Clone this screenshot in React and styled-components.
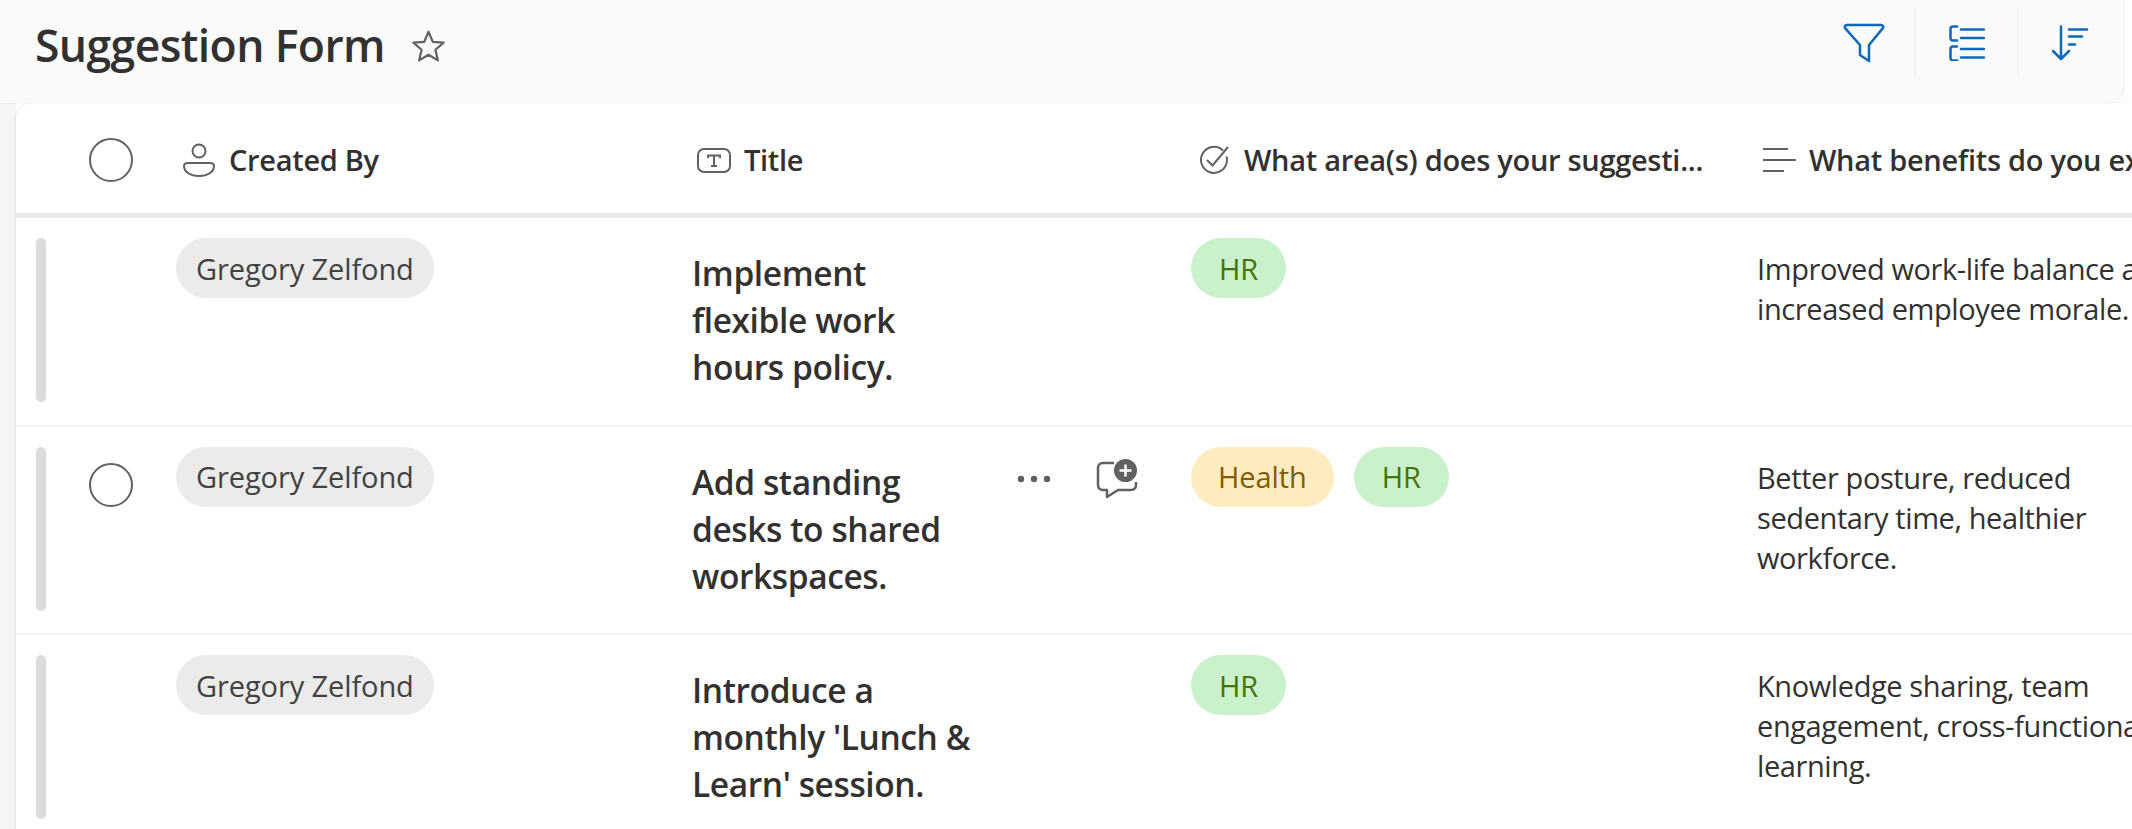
import React from "react";
import styled, { createGlobalStyle } from "styled-components";

const GlobalStyle = createGlobalStyle`
  html, body {
    margin: 0;
    padding: 0;
    height: 829px;
    overflow: hidden;
    background: #ffffff;
    font-family: "Open Sans", "Noto Sans", sans-serif;
  }
`;

const COLUMNS = "160px 515px 500px 565px 1fr";

const Page = styled.div`
  width: 2132px;
  height: 829px;
  overflow: hidden;
  display: flex;
  flex-direction: column;
`;

const TopBar = styled.header`
  position: relative;
  z-index: 1;
  width: 2123px;
  height: 103px;
  flex: none;
  display: flex;
  align-items: flex-start;
  justify-content: space-between;
  background: #fafafa;
  border-bottom-right-radius: 16px;
  box-shadow: 1px 0 3px rgba(0, 0, 0, 0.08);
`;

const TitleGroup = styled.div`
  display: flex;
  align-items: center;
  height: 88px;
  padding-left: 35px;
  gap: 26px;
`;

const PageTitle = styled.h1`
  margin: 0;
  font-size: 44.5px;
  font-weight: 600;
  letter-spacing: -0.6px;
  color: #323130;
`;

const StarSvg = styled.svg`
  flex: none;
  margin-top: 5px;
  fill: none;
  stroke: #616161;
  stroke-width: 2;
  stroke-linejoin: round;
`;

const Toolbar = styled.div`
  display: flex;
  padding-top: 8px;
  padding-right: 3px;
`;

const ToolButton = styled.div`
  width: 103px;
  height: 67px;
  display: flex;
  align-items: center;
  justify-content: center;
  box-sizing: border-box;
  border-left: 2px solid #f3f3f3;
  padding-top: 2px;
  ${({ $first }) => $first && "border-left-color: transparent;"}
`;

const Body = styled.main`
  flex: 1;
  min-height: 0;
  background: linear-gradient(to right, #f5f5f5 16px, #ffffff 16px);
`;

const Card = styled.section`
  height: 100%;
  margin-left: 16px;
  background: #ffffff;
  border-top-left-radius: 16px;
  box-shadow: -1px 0 3px rgba(0, 0, 0, 0.08);
  overflow: hidden;
`;

const HeaderRow = styled.div`
  display: grid;
  grid-template-columns: ${COLUMNS};
  height: 115px;
  box-sizing: border-box;
  padding-top: 4px;
  border-bottom: 5px solid #e9e9e9;
`;

const SelectCell = styled.div`
  display: flex;
  align-items: center;
  padding-left: 73px;
`;

const HeaderCell = styled.div`
  display: flex;
  align-items: center;
  gap: 12px;
  padding-left: 5px;
  min-width: 0;
  white-space: nowrap;
  overflow: hidden;
`;

const HeaderLabel = styled.span`
  padding-bottom: 2px;
  font-size: 29px;
  font-weight: 600;
  letter-spacing: -0.3px;
  color: #323130;
`;

const IconBox = styled.svg`
  width: 36px;
  height: 36px;
  flex: none;
  fill: none;
  stroke: #616161;
  stroke-width: 2;
`;

const Circle = styled.div`
  width: 44px;
  height: 44px;
  flex: none;
  box-sizing: border-box;
  border: 2px solid #616161;
  border-radius: 50%;
  visibility: ${({ $hidden }) => ($hidden ? "hidden" : "visible")};
`;

const Row = styled.div`
  display: grid;
  grid-template-columns: ${COLUMNS};
  height: 208.5px;
  box-sizing: border-box;
  padding-top: 20px;
  border-bottom: 2px solid #f2f2f2;
`;

const RowLead = styled.div`
  display: flex;
  align-items: flex-start;
  gap: 43px;
  padding-left: 20px;
`;

const DragBar = styled.div`
  width: 10px;
  height: 164px;
  flex: none;
  background: #dcdcdc;
  border-radius: 5px;
`;

const RowCircle = styled(Circle)`
  margin-top: 16px;
`;

const Tags = styled.div`
  display: flex;
  align-items: flex-start;
  gap: 20px;
`;

const TAG_COLORS = {
  person: { bg: "#ebebeb", fg: "#424242", pad: 20 },
  green: { bg: "#caf0cc", fg: "#437406", pad: 28 },
  amber: { bg: "#feecc1", fg: "#835b00", pad: 27 },
};

const Tag = styled.span`
  height: 60px;
  padding: 0 ${({ $tone }) => TAG_COLORS[$tone].pad}px;
  display: inline-flex;
  align-items: center;
  box-sizing: border-box;
  border-radius: 30px;
  font-size: 29px;
  letter-spacing: -0.1px;
  white-space: nowrap;
  background: ${({ $tone }) => TAG_COLORS[$tone].bg};
  color: ${({ $tone }) => TAG_COLORS[$tone].fg};
`;

const TitleCell = styled.div`
  display: flex;
  align-items: flex-start;
  padding-left: 1px;
`;

const RowTitle = styled.div`
  width: 290px;
  padding-top: 12px;
  font-size: 33.5px;
  line-height: 47px;
  font-weight: 600;
  letter-spacing: -0.4px;
  color: #323130;
`;

const RowActions = styled.div`
  display: flex;
  align-items: center;
  gap: 45px;
  margin-left: 35px;
  padding-top: 12px;
`;

const Benefit = styled.div`
  width: 420px;
  padding-top: 11px;
  padding-left: 1px;
  font-size: 29px;
  line-height: 40px;
  letter-spacing: -0.4px;
  color: #323130;
`;

const PersonIcon = () => (
  <IconBox viewBox="0 0 36 36">
    <circle cx="18" cy="9" r="6.500" />
    <path d="M7 21h22c2.500 0 4 1.200 4 3 0 6-6.500 10-15 10S3 30 3 24c0-1.800 1.500-3 4-3z" />
  </IconBox>
);

const TextIcon = () => (
  <IconBox viewBox="0 0 36 36">
    <rect x="2" y="7" width="32" height="23" rx="6" />
    <path d="M12 16v-2.500h12V16M18 13.500V24M15 24h6" />
  </IconBox>
);

const ChoiceIcon = () => (
  <IconBox viewBox="0 0 36 36">
    <path d="M27 8.500A13 13 0 1 0 31 18c0-1.300-.2-2.500-.5-3.500" />
    <path d="M11 18l5.500 5.500L32 5" />
  </IconBox>
);

const LinesIcon = () => (
  <IconBox viewBox="0 0 36 36">
    <path d="M2 7h25M2 18h33M2 29h21" />
  </IconBox>
);

const BlueIcon = styled.svg`
  flex: none;
  fill: none;
  stroke: #0f68b8;
  stroke-width: 2.5;
  stroke-linecap: round;
  stroke-linejoin: round;
`;

const StarIcon = () => (
  <StarSvg width="35" height="35" viewBox="0 0 32 32">
    <path d="M16 2.500l3.900 9.200 9.900.8-7.500 6.500 2.300 9.700L16 23.500l-8.600 5.200 2.300-9.700-7.500-6.500 9.900-.8z" />
  </StarSvg>
);

const FilterIcon = () => (
  <BlueIcon width="42" height="40" viewBox="0 0 42 40">
    <path d="M4 2h34c2 0 3 1.800 1.700 3.400L26 22v16l-9-6V22L2.300 5.400C1 3.800 2 2 4 2z" />
  </BlueIcon>
);

const ListIcon = () => (
  <BlueIcon width="36" height="36" viewBox="0 0 36 36">
    <path d="M8 1.500H4C2.500 1.500 1.500 2.500 1.500 4v9c0 1.500 1 2.500 2.500 2.500h4M8 21.500H4c-1.500 0-2.500 1-2.500 2.500v9c0 1.500 1 2.500 2.500 2.500h4" />
    <path d="M12 4.500h23M12 13h23M12 24h23M12 32.500h23" />
  </BlueIcon>
);

const SortIcon = () => (
  <BlueIcon width="38" height="36" viewBox="0 0 38 36">
    <path d="M10 1.500v32M2 26l8 8 8-8" />
    <path d="M18 4.500h18M18 11.500h13M18 19.500h6" />
  </BlueIcon>
);

const MoreIcon = () => (
  <svg width="34" height="8" viewBox="0 0 34 8" fill="#616161">
    <circle cx="4" cy="4" r="3.200" />
    <circle cx="17" cy="4" r="3.200" />
    <circle cx="30" cy="4" r="3.200" />
  </svg>
);

const CommentAddIcon = () => (
  <svg width="42" height="40" viewBox="0 0 42 40" fill="none">
    <path
      d="M18 4H7C4 4 2 6 2 9v17c0 3 2 5 5 5h4v7l11-7h13c3 0 5-2 5-5v-3"
      stroke="#616161"
      strokeWidth="2.500"
      strokeLinejoin="round"
    />
    <circle cx="29.500" cy="11.500" r="11.500" fill="#616161" />
    <path d="M29.500 5.500v12M23.500 11.500h12" stroke="#ffffff" strokeWidth="2.500" />
  </svg>
);

const rows = [
  {
    title: "Implement flexible work hours policy.",
    areas: [{ label: "HR", tone: "green" }],
    benefit: "Improved work-life balance and increased employee morale.",
  },
  {
    title: "Add standing desks to shared workspaces.",
    areas: [
      { label: "Health", tone: "amber" },
      { label: "HR", tone: "green" },
    ],
    benefit: "Better posture, reduced sedentary time, healthier workforce.",
    active: true,
  },
  {
    title: "Introduce a monthly 'Lunch & Learn' session.",
    areas: [{ label: "HR", tone: "green" }],
    benefit: "Knowledge sharing, team engagement, cross-functional learning.",
  },
];

const App = () => {
  return (
    <Page>
      <GlobalStyle />
      <TopBar>
        <TitleGroup>
          <PageTitle>Suggestion Form</PageTitle>
          <StarIcon />
        </TitleGroup>
        <Toolbar>
          <ToolButton $first>
            <FilterIcon />
          </ToolButton>
          <ToolButton>
            <ListIcon />
          </ToolButton>
          <ToolButton>
            <SortIcon />
          </ToolButton>
        </Toolbar>
      </TopBar>
      <Body>
        <Card>
          <HeaderRow>
            <SelectCell>
              <Circle />
            </SelectCell>
            <HeaderCell>
              <PersonIcon />
              <HeaderLabel>Created By</HeaderLabel>
            </HeaderCell>
            <HeaderCell>
              <TextIcon />
              <HeaderLabel>Title</HeaderLabel>
            </HeaderCell>
            <HeaderCell>
              <ChoiceIcon />
              <HeaderLabel>What area(s) does your suggesti...</HeaderLabel>
            </HeaderCell>
            <HeaderCell>
              <LinesIcon />
              <HeaderLabel>What benefits do you expect from this suggestion?</HeaderLabel>
            </HeaderCell>
          </HeaderRow>
          {rows.map((row) => (
            <Row key={row.title}>
              <RowLead>
                <DragBar />
                <RowCircle $hidden={!row.active} />
              </RowLead>
              <Tags>
                <Tag $tone="person">Gregory Zelfond</Tag>
              </Tags>
              <TitleCell>
                <RowTitle>{row.title}</RowTitle>
                {row.active && (
                  <RowActions>
                    <MoreIcon />
                    <CommentAddIcon />
                  </RowActions>
                )}
              </TitleCell>
              <Tags>
                {row.areas.map((area) => (
                  <Tag key={area.label} $tone={area.tone}>
                    {area.label}
                  </Tag>
                ))}
              </Tags>
              <Benefit>{row.benefit}</Benefit>
            </Row>
          ))}
        </Card>
      </Body>
    </Page>
  );
};

export default App;
